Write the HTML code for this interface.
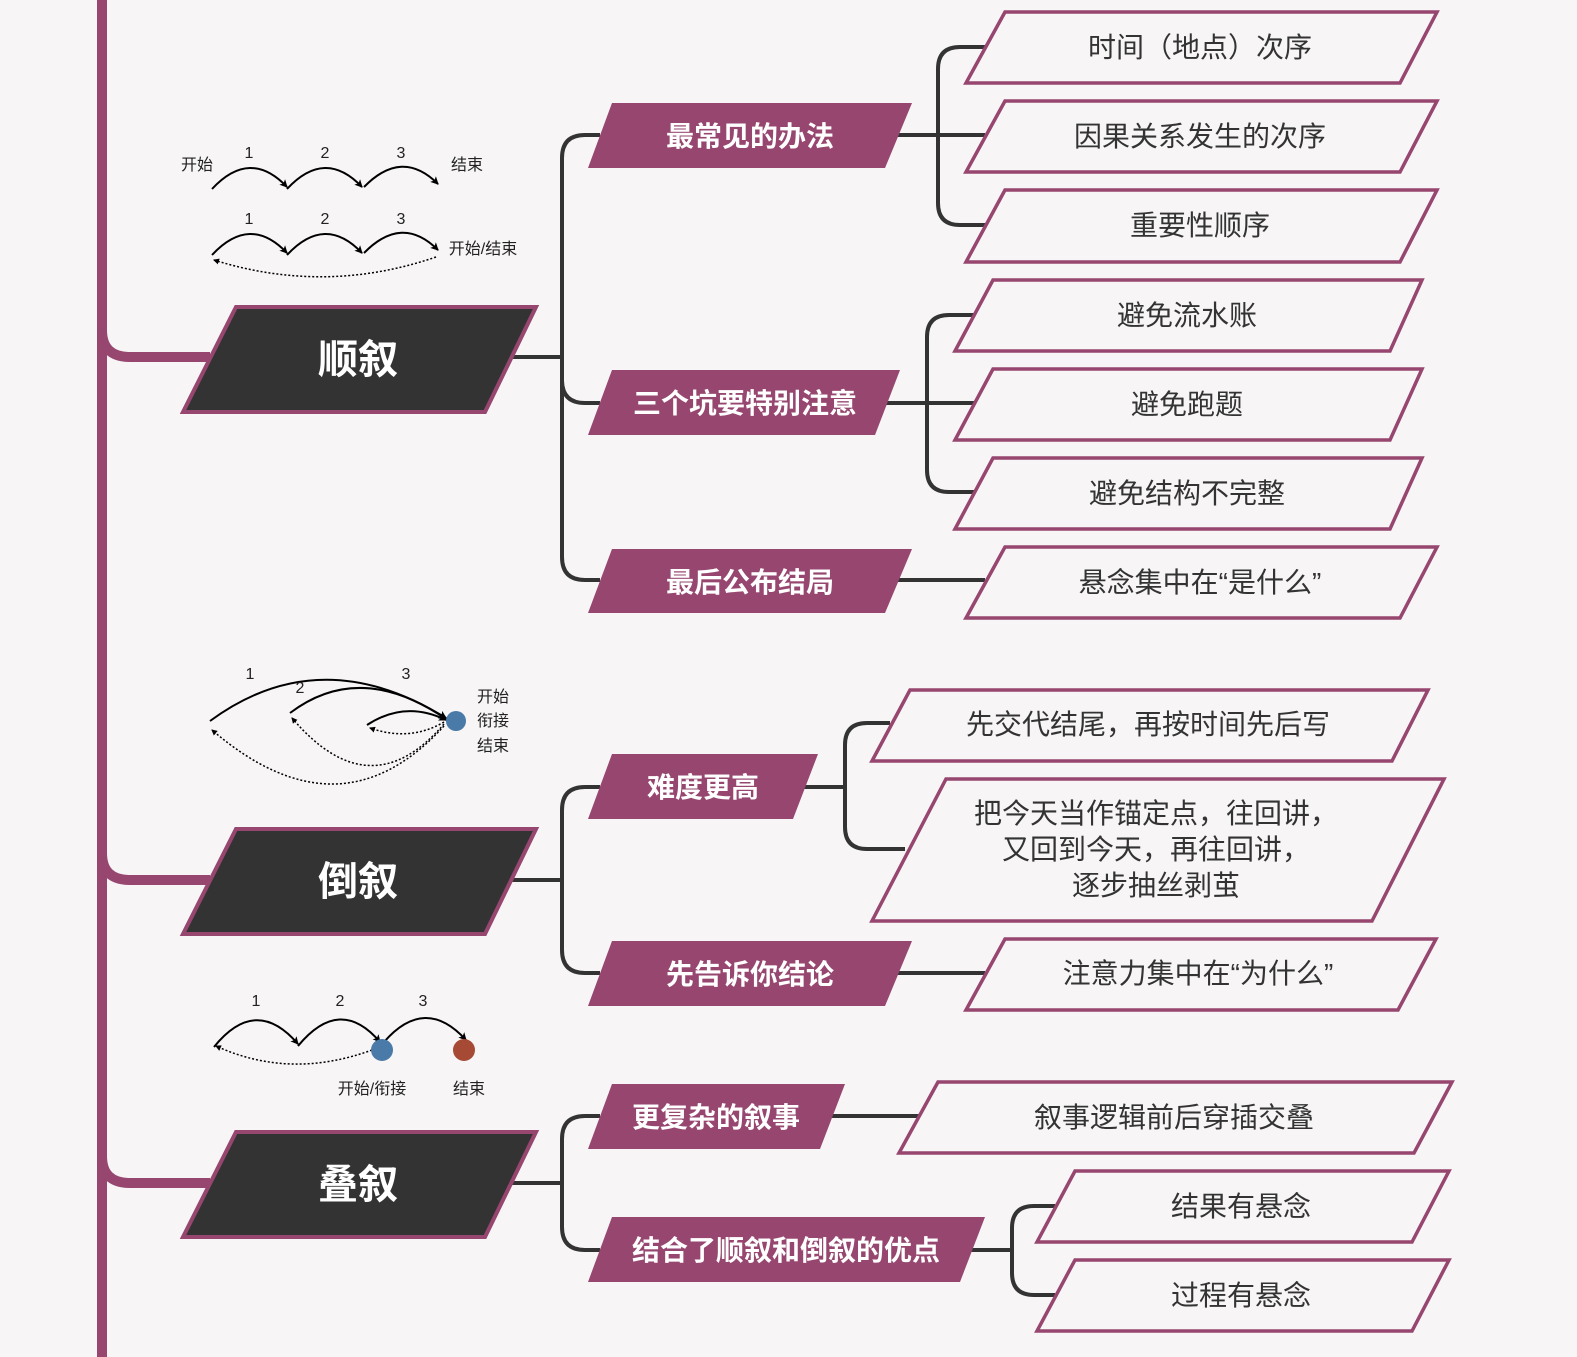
<!DOCTYPE html>
<html><head><meta charset="utf-8"><style>
html,body{margin:0;padding:0;background:#f7f5f6;}
svg{display:block;}
.t{font-family:"Liberation Sans","Noto Sans CJK SC",sans-serif;}
</style></head><body>
<svg width="1577" height="1357" viewBox="0 0 1577 1357" xmlns="http://www.w3.org/2000/svg" class="t">
<defs>
<marker id="ar" markerWidth="8" markerHeight="8" refX="7" refY="4" orient="auto" markerUnits="userSpaceOnUse"><path d="M0,0 L8,4 L0,8 L2,4 Z" fill="#000"/></marker>
<marker id="ars" markerWidth="6" markerHeight="6" refX="5" refY="3" orient="auto" markerUnits="userSpaceOnUse"><path d="M0,0 L6,3 L0,6 Z" fill="#000"/></marker>
</defs>
<rect width="1577" height="1357" fill="#f7f5f6"/>
<g fill="none" stroke="#96466f" stroke-width="10">
<line x1="102" y1="0" x2="102" y2="1357"/>
<path d="M102,330 Q102,357 130,357 H210"/>
<path d="M102,853 Q102,880 130,880 H210"/>
<path d="M102,1156 Q102,1183 130,1183 H210"/>
</g>
<g fill="none" stroke="#333" stroke-width="4">
<path d="M510,357 H562"/>
<path d="M600,135 H585 Q562,135 562,158 V557 Q562,580 585,580 H600"/>
<path d="M562,380 Q562,403 585,403 H600"/>
<path d="M885,135 H985"/>
<path d="M985,47 H960 Q938,47 938,69 V203 Q938,225 960,225 H985"/>
<path d="M875,403 H975"/>
<path d="M975,315 H949 Q927,315 927,337 V470 Q927,492 949,492 H975"/>
<path d="M885,580 H985"/>
<path d="M510,880 H562"/>
<path d="M600,787 H585 Q562,787 562,810 V950 Q562,973 585,973 H600"/>
<path d="M793,787 H845"/>
<path d="M890,723 H867 Q845,723 845,745 V827 Q845,849 867,849 H905"/>
<path d="M885,973 H985"/>
<path d="M510,1183 H562"/>
<path d="M600,1116 H585 Q562,1116 562,1139 V1227 Q562,1250 585,1250 H600"/>
<path d="M820,1116 H920"/>
<path d="M960,1250 H1012"/>
<path d="M1055,1206 H1034 Q1012,1206 1012,1228 V1273 Q1012,1295 1034,1295 H1055"/>
</g>
<g fill="#333" stroke="#96466f" stroke-width="4">
<polygon points="236,307 536,307 485,412 183,412"/>
<polygon points="236,829 536,829 485,934 183,934"/>
<polygon points="236,1132 536,1132 485,1237 183,1237"/>
</g>
<g fill="#fff" font-size="40" font-weight="bold" text-anchor="middle">
<text x="358" y="373">顺叙</text>
<text x="358" y="895">倒叙</text>
<text x="358" y="1198">叠叙</text>
</g>
<g fill="#96466f">
<polygon points="612,103 912,103 885,168 588,168"/>
<polygon points="612,370 900,370 875,435 588,435"/>
<polygon points="612,549 912,549 885,613 588,613"/>
<polygon points="612,754 818,754 793,819 588,819"/>
<polygon points="612,941 912,941 885,1006 588,1006"/>
<polygon points="612,1084 845,1084 820,1149 588,1149"/>
<polygon points="612,1217 985,1217 960,1282 588,1282"/>
</g>
<g fill="#fff" font-size="28" font-weight="bold" text-anchor="middle">
<text x="750" y="146">最常见的办法</text>
<text x="745" y="413">三个坑要特别注意</text>
<text x="750" y="592">最后公布结局</text>
<text x="703" y="797">难度更高</text>
<text x="750" y="984">先告诉你结论</text>
<text x="716" y="1127">更复杂的叙事</text>
<text x="786" y="1260">结合了顺叙和倒叙的优点</text>
</g>
<g fill="#f7f5f6" stroke="#96466f" stroke-width="3.5">
<polygon points="1005,12 1437,12 1400,83 966,83"/>
<polygon points="1005,101 1437,101 1400,172 966,172"/>
<polygon points="1005,190 1437,190 1400,262 966,262"/>
<polygon points="993,280 1422,280 1390,351 955,351"/>
<polygon points="993,369 1422,369 1390,440 955,440"/>
<polygon points="993,458 1422,458 1390,529 955,529"/>
<polygon points="1005,547 1437,547 1400,618 966,618"/>
<polygon points="910,690 1428,690 1392,761 872,761"/>
<polygon points="946,779 1444,779 1372,921 872,921"/>
<polygon points="1005,939 1436,939 1398,1010 966,1010"/>
<polygon points="938,1082 1452,1082 1414,1153 899,1153"/>
<polygon points="1075,1171 1449,1171 1412,1242 1037,1242"/>
<polygon points="1075,1260 1449,1260 1412,1331 1037,1331"/>
</g>
<g fill="#333" font-size="28" text-anchor="middle">
<text x="1200" y="57">时间（地点）次序</text>
<text x="1200" y="146">因果关系发生的次序</text>
<text x="1200" y="235">重要性顺序</text>
<text x="1187" y="325">避免流水账</text>
<text x="1187" y="414">避免跑题</text>
<text x="1187" y="503">避免结构不完整</text>
<text x="1200" y="592">悬念集中在“是什么”</text>
<text x="1148" y="734">先交代结尾，再按时间先后写</text>
<text x="1156" y="823">把今天当作锚定点，往回讲，</text>
<text x="1156" y="859">又回到今天，再往回讲，</text>
<text x="1156" y="895">逐步抽丝剥茧</text>
<text x="1198" y="983">注意力集中在“为什么”</text>
<text x="1174" y="1127">叙事逻辑前后穿插交叠</text>
<text x="1241" y="1216">结果有悬念</text>
<text x="1241" y="1305">过程有悬念</text>
</g>
<g fill="none" stroke="#000" stroke-width="2">
<path d="M212,189 Q250,148 287,187" marker-end="url(#ar)"/>
<path d="M287,189 Q325,148 362,187" marker-end="url(#ar)"/>
<path d="M364,187 Q402,148 438,184" marker-end="url(#ar)"/>
<path d="M212,255 Q250,214 287,253" marker-end="url(#ar)"/>
<path d="M287,255 Q325,214 362,253" marker-end="url(#ar)"/>
<path d="M364,253 Q402,214 438,250" marker-end="url(#ar)"/>
<path d="M436,257 Q325,295 214,260" stroke-width="1.5" stroke-dasharray="2,2" marker-end="url(#ars)"/>
</g>
<g fill="#222" font-size="16" text-anchor="middle">
<text x="197" y="170">开始</text><text x="467" y="170">结束</text>
<text x="249" y="158">1</text><text x="325" y="158">2</text><text x="401" y="158">3</text>
<text x="249" y="224">1</text><text x="325" y="224">2</text><text x="401" y="224">3</text>
<text x="483" y="254">开始/结束</text>
</g>
<g fill="none" stroke="#000" stroke-width="2">
<path d="M210,721 Q320,640 446,718" marker-end="url(#ar)"/>
<path d="M290,713 Q360,660 446,719" marker-end="url(#ar)"/>
<path d="M367,725 Q405,700 446,720" marker-end="url(#ar)"/>
<g stroke-width="1.5" stroke-dasharray="2,2">
<path d="M444,726 Q340,840 212,730" marker-end="url(#ars)"/>
<path d="M444,724 Q370,810 292,718" marker-end="url(#ars)"/>
<path d="M444,722 Q410,742 370,728" marker-end="url(#ars)"/>
</g>
</g>
<circle cx="456" cy="721" r="10" fill="#4a7aa8"/>
<g fill="#222" font-size="16" text-anchor="middle">
<text x="250" y="679">1</text><text x="300" y="693">2</text><text x="406" y="679">3</text>
<text x="493" y="702">开始</text><text x="493" y="726">衔接</text><text x="493" y="751">结束</text>
</g>
<g fill="none" stroke="#000" stroke-width="2">
<path d="M214,1047 Q256,995 298,1044" marker-end="url(#ar)"/>
<path d="M298,1046 Q340,995 380,1042" marker-end="url(#ar)"/>
<path d="M384,1042 Q425,995 466,1040" marker-end="url(#ar)"/>
<path d="M372,1050 Q290,1080 216,1046" stroke-width="1.5" stroke-dasharray="2,2" marker-end="url(#ars)"/>
</g>
<circle cx="382" cy="1050" r="11" fill="#4a7aa8"/>
<circle cx="464" cy="1050" r="11" fill="#a64a35"/>
<g fill="#222" font-size="16" text-anchor="middle">
<text x="256" y="1006">1</text><text x="340" y="1006">2</text><text x="423" y="1006">3</text>
<text x="372" y="1094">开始/衔接</text><text x="469" y="1094">结束</text>
</g>
</svg>
</body></html>
